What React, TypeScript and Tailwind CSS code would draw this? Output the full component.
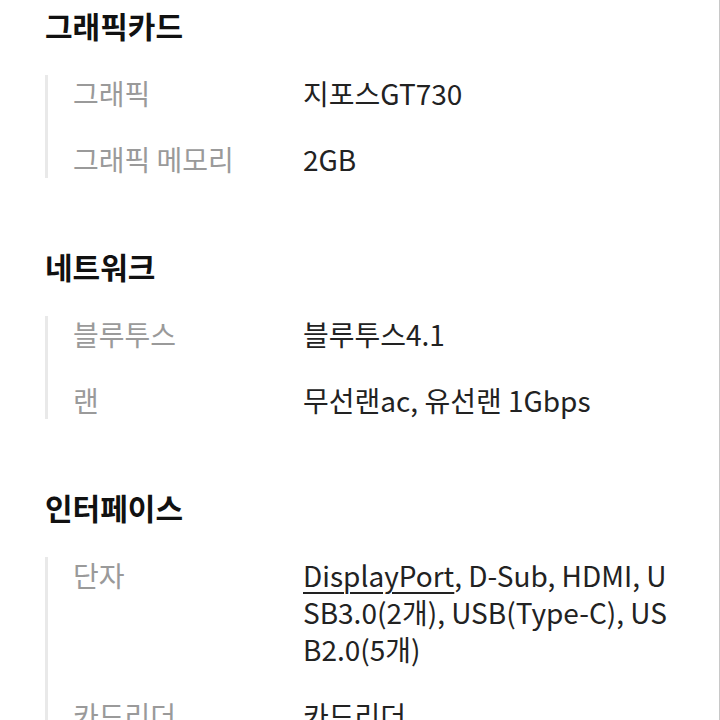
const sections = [
  {
    title: '그래픽카드',
    rows: [
      { label: '그래픽', value: '지포스GT730' },
      { label: '그래픽 메모리', value: '2GB' },
    ],
  },
  {
    title: '네트워크',
    rows: [
      { label: '블루투스', value: '블루투스4.1' },
      { label: '랜', value: '무선랜ac, 유선랜 1Gbps' },
    ],
  },
  {
    title: '인터페이스',
    rows: [
      {
        label: '단자',
        value: (
          <>
            <span className="underline decoration-[1.5px] underline-offset-[5px]">DisplayPort</span>, D-Sub, HDMI, USB3.0(2개), USB(Type-C), USB2.0(5개)
          </>
        ),
      },
      { label: '카드리더', value: '카드리더' },
    ],
  },
];

export default function App() {
  return (
    <div className="w-[720px] h-[720px] overflow-hidden bg-white border-r border-[#c8c8c8] pl-[45px] pt-[5px] font-['Noto_Sans_CJK_KR','Noto_Sans',sans-serif]">
      {sections.map((section, i) => (
        <section key={section.title} className={i === 0 ? '' : 'mt-[68px]'}>
          <h2 className="text-[30px] leading-[40px] font-bold text-[#111]">{section.title}</h2>
          <dl className="mt-[30px] border-l-[3px] border-[#e9e9e9] flex flex-col gap-[29px]">
            {section.rows.map((row) => (
              <div key={row.label} className="flex text-[28px] leading-[37px]">
                <dt className="w-[255px] shrink-0 pl-[25px] text-[#9a9a9a]">{row.label}</dt>
                <dd className="w-[376px] break-all text-[#222]">{row.value}</dd>
              </div>
            ))}
          </dl>
        </section>
      ))}
    </div>
  );
}
